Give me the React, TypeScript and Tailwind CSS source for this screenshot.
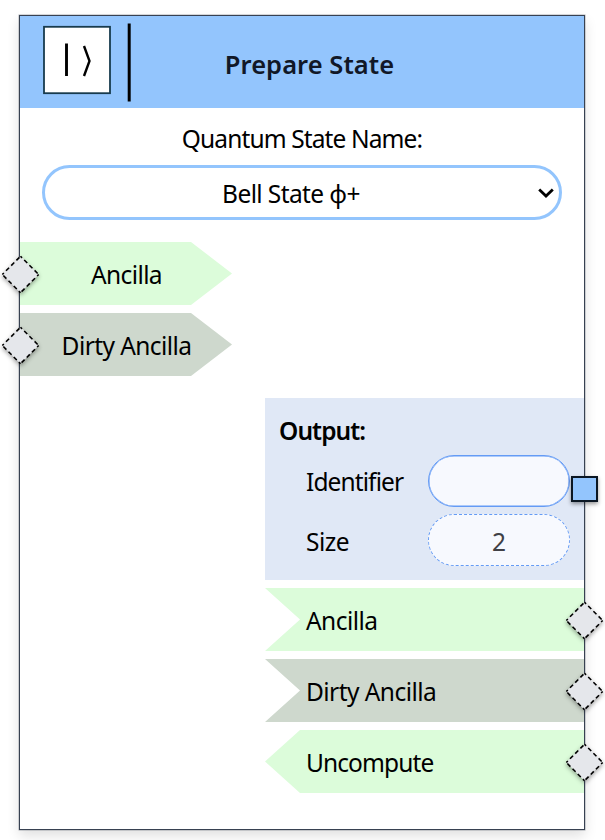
import type { ReactNode } from "react";

type Side = "left" | "right";

function DashedHandle({ side }: { side: Side }) {
  return (
    <svg
      className={`absolute top-[11px] h-[43px] w-[43px] overflow-visible drop-shadow-[0_2px_2px_rgba(0,0,0,0.35)] ${
        side === "left" ? "left-[-21px]" : "right-[-22px]"
      }`}
      viewBox="0 0 43 43"
    >
      <path d="M21.5 3.3 39.7 21.5 21.5 39.7 3.3 21.5Z" fill="#e5e7eb" />
      <path
        d="M21.5 3.3 39.7 21.5M39.7 21.5 21.5 39.7M21.5 39.7 3.3 21.5M3.3 21.5 21.5 3.3"
        fill="none"
        stroke="#000"
        strokeWidth="1.6"
        strokeDasharray="4.3 3.05"
        strokeDashoffset="2.1"
      />
    </svg>
  );
}

function Row({ side, shape, children }: { side: Side; shape: string; children: ReactNode }) {
  return (
    <div className={`relative h-[63px] ${side === "left" ? "w-[212px]" : "ml-auto w-[319px]"}`}>
      <div
        className={`flex h-full items-center pt-[3px] ${shape} ${
          side === "left" ? "justify-center" : "pl-[41px]"
        }`}
      >
        {children}
      </div>
      <DashedHandle side={side} />
    </div>
  );
}

const arrowRight = "[clip-path:polygon(0_0,171px_0,100%_50%,171px_100%,0_100%)]";
const notched = "[clip-path:polygon(0_0,100%_0,100%_100%,0_100%,35px_50%)]";
const arrowLeft = "[clip-path:polygon(35px_0,100%_0,100%_100%,35px_100%,0_50%)]";

export default function App() {
  return (
    <div className="h-[840px] w-[605px] overflow-hidden bg-white pl-[19px] pt-[15px] font-['Noto_Sans',sans-serif] text-[24.5px] leading-[34px] text-black">
      <div className="h-[815px] w-[566px] border border-[#374151] bg-white shadow-[0_0_0_0.5px_rgba(55,65,81,0.4),0_6px_12px_rgba(0,0,0,0.12)]">
        <header className="flex h-[92px] bg-[#93c5fd]">
          <svg className="h-[92px] w-[114px] shrink-0" viewBox="0 0 114 92">
            <rect x="24" y="10.8" width="66" height="66.4" fill="#fff" stroke="#183b4e" strokeWidth="1.8" />
            <path d="M46.5 27.5V60" stroke="#000" strokeWidth="2.9" />
            <path d="M64 30 69.5 45 64 60" fill="none" stroke="#000" strokeWidth="2.4" />
            <path d="M109.2 7.5V85.5" stroke="#000" strokeWidth="3" />
          </svg>
          <h1 className="flex w-[351px] items-center justify-center pt-[3px] text-[25.5px] font-semibold tracking-[0.05px] text-[#111827]">
            Prepare State
          </h1>
        </header>

        <div className="mx-[22px] mt-[14px]">
          <div className="text-center tracking-[-0.88px]">Quantum State Name:</div>
          <div className="relative mt-[9px] flex h-[55px] items-center justify-center rounded-full border-[3px] border-[#93c5fd] pr-[22px] pt-[3px] tracking-[-0.6px]">
            Bell State ϕ+
            <svg className="absolute right-[4px] top-[17px] h-[16px] w-[18px]" viewBox="0 0 18 16">
              <path d="M2.2 4.5 9 11 15.8 4.5" fill="none" stroke="#000" strokeWidth="2.8" />
            </svg>
          </div>
        </div>

        <section className="mt-[22px] flex flex-col gap-[8px]">
          <Row side="left" shape={`bg-[#dcfcda] ${arrowRight}`}>
            <span className="pl-px tracking-[-0.6px]">Ancilla</span>
          </Row>
          <Row side="left" shape={`bg-[#ced8cd] ${arrowRight}`}>
            <span className="pl-px tracking-[-0.58px]">Dirty Ancilla</span>
          </Row>
        </section>

        <section className="ml-auto mt-[22px] h-[182px] w-[319px] bg-[#e0e8f6] pl-[14px] pt-[16px]">
          <h2 className="font-semibold tracking-[-0.9px]">Output:</h2>
          <div className="relative mt-[7px] flex h-[52px] items-center">
            <span className="w-[149px] pl-[27px] pt-[2px] tracking-[-0.9px]">Identifier</span>
            <div className="h-[52px] w-[142px] rounded-full border border-[#649bf5] bg-[#f7f9fe] shadow-[inset_0_0_0_0.5px_#649bf5]" />
            <div className="absolute right-[-14px] top-[21px] h-[26px] w-[27px] border-2 border-[#0b1723] bg-[#93c5fd] shadow-[0_2px_4px_rgba(0,0,0,0.4)]" />
          </div>
          <div className="mt-[7px] flex h-[52px] items-center">
            <span className="w-[149px] pl-[27px] pt-[3px] tracking-[-0.5px]">Size</span>
            <div className="flex h-[52px] w-[142px] items-center justify-center rounded-full border border-dashed border-[#649bf5] bg-[#f7f9fe] pt-[3px] text-[#404045]">
              2
            </div>
          </div>
        </section>

        <section className="mt-[8px] flex flex-col gap-[8px]">
          <Row side="right" shape={`bg-[#dcfcda] ${notched}`}>
            <span className="tracking-[-0.55px]">Ancilla</span>
          </Row>
          <Row side="right" shape={`bg-[#ced8cd] ${notched}`}>
            <span className="tracking-[-0.55px]">Dirty Ancilla</span>
          </Row>
          <Row side="right" shape={`bg-[#dcfcda] ${arrowLeft}`}>
            <span className="tracking-[-0.9px]">Uncompute</span>
          </Row>
        </section>
      </div>
    </div>
  );
}
